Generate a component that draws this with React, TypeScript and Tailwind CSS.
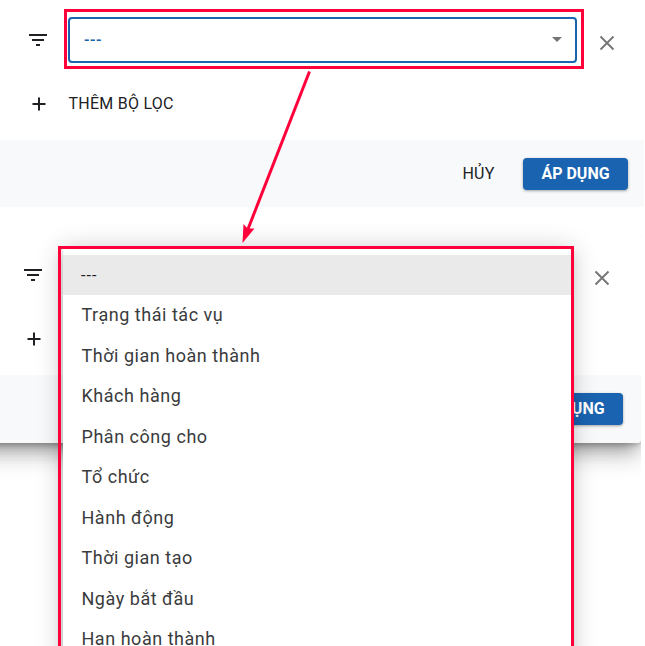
const options = [
  'Trạng thái tác vụ',
  'Thời gian hoàn thành',
  'Khách hàng',
  'Phân công cho',
  'Tổ chức',
  'Hành động',
  'Thời gian tạo',
  'Ngày bắt đầu',
  'Hạn hoàn thành',
];

function FilterIcon() {
  return (
    <svg className="size-6 shrink-0" viewBox="0 0 24 24" fill="#202124" shapeRendering="crispEdges">
      <path d="M3 6h18v2H3zM6 11h12v2H6zM10 16h4v2h-4z" />
    </svg>
  );
}

function PlusIcon() {
  return (
    <svg className="size-6 shrink-0" viewBox="0 0 24 24" fill="#202124">
      <path d="M18.500 13H13v5.500h-2V13H5.500v-2H11V5.500h2V11h5.500z" />
    </svg>
  );
}

function CloseIcon() {
  return (
    <svg className="size-6 shrink-0" viewBox="0 0 24 24" fill="none" stroke="#757575" strokeWidth="1.9">
      <path d="M5.500 5.500l13 13M18.500 5.500l-13 13" />
    </svg>
  );
}

function Footer() {
  return (
    <div className="flex flex-1 items-start justify-end bg-[#f7f9fb] pt-[18px] pr-4 text-base leading-[31px]">
      <button className="mr-[28.5px] font-normal text-[#202124] tracking-[0.2px]">HỦY</button>
      <button className="h-8 w-[105px] rounded-[4px] bg-[#1a63b0] pb-px font-bold leading-[30px] text-white shadow-[0_1px_3px_rgba(0,0,0,0.35)]">
        ÁP DỤNG
      </button>
    </div>
  );
}

function FilterPanel() {
  return (
    <div className="flex h-[207px] w-[644px] flex-col bg-white">
      <div className="flex h-[140px] shrink-0 flex-col pt-[9px]">
        <div className="flex pl-[26px]">
          <div className="mt-[19px] mr-[14px] flex">
            <FilterIcon />
          </div>
          <div className="h-[60px] w-[520px] border-[3px] border-[#ff003b] pt-[5px] pl-px">
            <div className="flex h-[46px] w-[509px] items-center justify-between rounded-[4px] border-2 border-[#1a63b0] pr-[13px] pl-[14px] text-base text-[#1a63b0]">
              <span className="font-medium tracking-[0.5px]">---</span>
              <svg className="-mt-0.5 h-[5px] w-[10px]" viewBox="0 0 10 5" fill="#757575">
                <path d="M0 0h10L5 5z" />
              </svg>
            </div>
          </div>
          <div className="mt-[22px] ml-[11px]">
            <CloseIcon />
          </div>
        </div>
        <div className="mt-[23px] flex items-center pl-[27px] text-base leading-6 text-[#202124]">
          <PlusIcon />
          <span className="ml-[17.5px] font-normal tracking-[0.25px]">THÊM BỘ LỌC</span>
        </div>
      </div>
      <Footer />
    </div>
  );
}

function OpenPanel() {
  return (
    <div className="h-[411px] w-[641px] overflow-hidden">
      <div className="-ml-10 flex h-[208px] w-[681px] flex-col rounded-[4px] shadow-[0_11px_15px_-7px_rgba(0,0,0,0.3),0_14px_22px_0_rgba(0,0,0,0.2),0_2px_5px_rgba(0,0,0,0.2)]">
        <div className="flex h-[140px] shrink-0 justify-between rounded-t bg-white pr-[27px] pl-[61px]">
          <div className="flex flex-col pt-[28px]">
            <FilterIcon />
            <div className="mt-10 ml-px">
              <PlusIcon />
            </div>
          </div>
          <div className="pt-[31px]">
            <CloseIcon />
          </div>
        </div>
        <div className="flex flex-1 flex-col overflow-hidden rounded-b-[4px] bg-[#f7f9fb] pr-[2px]">
          <Footer />
        </div>
      </div>
    </div>
  );
}

function OptionMenu() {
  return (
    <div className="absolute top-[246px] left-[58px] h-[430px] w-[516px] border-[3px] border-[#ff003b] pl-[2px]">
      <ul className="h-full bg-white pt-[6px] text-[18px] text-[#3a3b3d]">
        <li className="flex h-10 items-center bg-[#eaeaea] pt-px pl-[18px] text-base tracking-[1.1px] text-[#202124]">
          ---
        </li>
        {options.map((label) => (
          <li key={label} className="flex h-[40.5px] items-center pb-px pl-[18.5px] tracking-[0.53px]">
            {label}
          </li>
        ))}
      </ul>
    </div>
  );
}

export default function App() {
  return (
    <div className="relative flex h-[646px] w-[645px] flex-col gap-7 overflow-hidden bg-white font-['Roboto',sans-serif]">
      <FilterPanel />
      <OpenPanel />
      <div className="absolute top-[247px] left-[63px] h-[440px] w-[508px] shadow-[0_5px_5px_-3px_rgba(0,0,0,0.2),0_8px_10px_1px_rgba(0,0,0,0.12),0_3px_24px_2px_rgba(0,0,0,0.2)]" />
      <OptionMenu />
      <svg className="pointer-events-none absolute top-[70px] left-[235px]" width="80" height="175" viewBox="235 70 80 175">
        <path d="M309.500 71.500L248 229" stroke="#ff003b" strokeWidth="3" fill="none" />
        <path d="M242.500 243L243.500 224L247.500 228.500L254.500 228.500Z" fill="#ff003b" />
      </svg>
    </div>
  );
}
